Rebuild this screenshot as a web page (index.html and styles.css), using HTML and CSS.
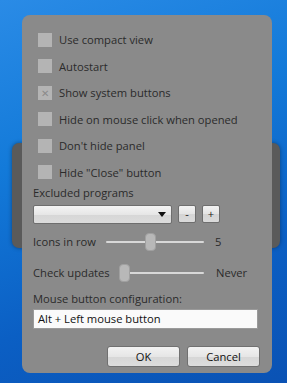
FILE: index.html
```html
<!DOCTYPE html>
<html lang="en">
<head>
    <meta charset="UTF-8">
    <title>Settings</title>
    <link rel="stylesheet" href="styles.css">
</head>
<body>

<div class="desktop">
    <div class="back-window"></div>

    <div class="panel">
        <div class="checks">
            <label class="check"><span class="box"></span>Use compact view</label>
            <label class="check"><span class="box"></span>Autostart</label>
            <label class="check"><span class="box checked">&#x2715;</span>Show system buttons</label>
            <label class="check"><span class="box"></span>Hide on mouse click when opened</label>
            <label class="check"><span class="box"></span>Don't hide panel</label>
            <label class="check"><span class="box"></span>Hide "Close" button</label>
        </div>

        <div class="caption">Excluded programs</div>
        <div class="combo-row">
            <div class="combo"><span class="arrow"></span></div>
            <div class="small-btn">-</div>
            <div class="small-btn">+</div>
        </div>

        <div class="slider-row">
            <span class="slider-label">Icons in row</span>
            <div class="slider icons"><span class="thumb"></span></div>
            <span class="slider-value">5</span>
        </div>

        <div class="slider-row updates">
            <span class="slider-label">Check updates</span>
            <div class="slider check-upd"><span class="thumb"></span></div>
            <span class="slider-value">Never</span>
        </div>

        <div class="caption mouse">Mouse button configuration:</div>
        <div class="textbox">Alt + Left mouse button</div>

        <div class="buttons">
            <div class="btn">OK</div>
            <div class="btn">Cancel</div>
        </div>
    </div>
</div>

</body>
</html>
```

FILE: styles.css
```css
* {
    margin: 0;
    padding: 0;
    box-sizing: border-box;
    font-family: 'Open Sans', 'Noto Sans', sans-serif;
}

body {
    width: 287px;
    height: 383px;
    overflow: hidden;
}

.desktop {
    position: relative;
    width: 287px;
    height: 383px;
    padding: 15px 0 0 22px;
    background: linear-gradient(160deg, #2a8be6 0%, #137ad9 35%, #0b5fc4 70%, #0a52b4 100%);
}

.back-window {
    position: absolute;
    left: 12px;
    top: 143px;
    width: 268px;
    height: 105px;
    background: #5a5a5a;
    border-radius: 7px;
    box-shadow: 0 0 4px rgba(0, 0, 0, 0.4);
}

.panel {
    position: relative;
    width: 250px;
    height: 358px;
    background-color: #8a8a8a;
    border-radius: 8px;
    padding: 17px 0 0 11px;
    color: #2b2b2b;
    font-size: 11.2px;
}

.checks {
    display: flex;
    flex-direction: column;
    gap: 11.6px;
    padding-left: 5px;
}

.check {
    display: flex;
    align-items: center;
    gap: 7px;
    height: 15px;
    line-height: 15px;
}

.box {
    width: 14px;
    height: 14px;
    background: #b4b4b4;
    color: #8a8a8a;
    font-size: 10px;
    line-height: 14px;
    text-align: center;
}

.caption {
    margin-top: 6px;
    height: 14px;
    line-height: 14px;
}

.combo-row {
    display: flex;
    align-items: center;
    gap: 6px;
    margin-top: 5px;
}

.combo {
    position: relative;
    width: 139px;
    height: 19px;
    border: 1px solid #6e6e6e;
    border-radius: 2px;
    background: linear-gradient(#f4f4f4, #e6e6e6 50%, #d6d6d6 51%, #dcdcdc);
}

.arrow {
    position: absolute;
    right: 5px;
    top: 6px;
    border-left: 4px solid transparent;
    border-right: 4px solid transparent;
    border-top: 5px solid #111;
}

.small-btn {
    width: 18px;
    height: 18px;
    border: 1px solid #6e6e6e;
    border-radius: 2px;
    background: linear-gradient(#f2f2f2, #e4e4e4 50%, #d4d4d4 51%, #dadada);
    text-align: center;
    line-height: 15px;
    font-size: 11px;
    color: #222;
}

.slider-row {
    display: flex;
    align-items: center;
    height: 18px;
    margin-top: 9px;
    white-space: nowrap;
}

.slider-row.updates {
    margin-top: 13px;
}

.slider-label {
    flex: none;
    width: 73px;
}

.updates .slider-label {
    width: 86px;
}

.slider {
    position: relative;
    flex: none;
    width: 98px;
    height: 2px;
    background: #d8d8d8;
    border-radius: 1px;
}

.slider.check-upd {
    width: 85px;
}

.thumb {
    position: absolute;
    top: -8px;
    width: 11px;
    height: 18px;
    background: #b8b8b8;
    border: 1px solid #a0a0a0;
    border-radius: 4px;
}

.icons .thumb {
    left: 39px;
}

.check-upd .thumb {
    left: 0;
}

.slider-value {
    margin-left: 11px;
}

.updates .slider-value {
    margin-left: 12px;
}

.caption.mouse {
    margin-top: 10px;
}

.textbox {
    margin-top: 3px;
    width: 225px;
    height: 20px;
    background: #fafafa;
    border: 1px solid #9a9a9a;
    padding-left: 4px;
    line-height: 18px;
    color: #111;
}

.buttons {
    display: flex;
    gap: 7px;
    margin: 17px 0 0 74px;
}

.btn {
    width: 73px;
    height: 21px;
    border: 1px solid #707070;
    border-radius: 3px;
    background: linear-gradient(#f2f2f2, #e6e6e6 50%, #d6d6d6 51%, #dddddd);
    text-align: center;
    line-height: 19px;
    color: #111;
}
```
